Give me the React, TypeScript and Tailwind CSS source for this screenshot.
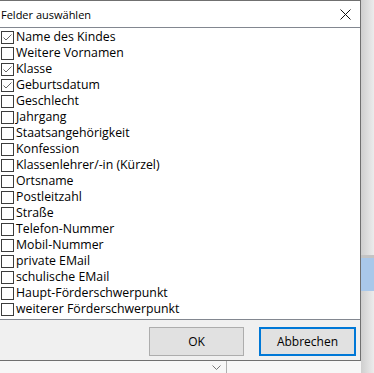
import React from 'react';

const fields: { label: string; checked: boolean }[] = [
  { label: 'Name des Kindes', checked: true },
  { label: 'Weitere Vornamen', checked: false },
  { label: 'Klasse', checked: true },
  { label: 'Geburtsdatum', checked: true },
  { label: 'Geschlecht', checked: false },
  { label: 'Jahrgang', checked: false },
  { label: 'Staatsangehörigkeit', checked: false },
  { label: 'Konfession', checked: false },
  { label: 'Klassenlehrer/-in (Kürzel)', checked: false },
  { label: 'Ortsname', checked: false },
  { label: 'Postleitzahl', checked: false },
  { label: 'Straße', checked: false },
  { label: 'Telefon-Nummer', checked: false },
  { label: 'Mobil-Nummer', checked: false },
  { label: 'private EMail', checked: false },
  { label: 'schulische EMail', checked: false },
  { label: 'Haupt-Förderschwerpunkt', checked: false },
  { label: 'weiterer Förderschwerpunkt', checked: false },
];

function CheckBox({ checked }: { checked: boolean }) {
  return (
    <span className="w-[13px] h-[13px] border border-[#3c3c3c] bg-white flex items-center justify-center shrink-0">
      {checked && (
        <svg width="11" height="11" viewBox="0 0 11 11">
          <path d="M1.5 5.5 L4 8 L9.5 2.5" fill="none" stroke="#666666" strokeWidth="1" />
        </svg>
      )}
    </span>
  );
}

export default function App() {
  return (
    <div
      className="w-[374px] h-[373px] bg-white flex overflow-hidden"
      style={{ fontFamily: '"Open Sans", "Noto Sans", sans-serif' }}
    >
      {/* Dialog + background below */}
      <div className="w-[361px] flex flex-col">
        <div className="h-[361px] flex flex-col bg-white border-t border-r border-b border-[#707070]">
          {/* Title bar */}
          <div className="h-[26px] flex items-center justify-between pl-px pr-[9px]">
            <span className="text-[11px] text-black leading-none">Felder auswählen</span>
            <svg width="11" height="11" viewBox="0 0 11 11">
              <path d="M0.5 0.5 L10.5 10.5 M10.5 0.5 L0.5 10.5" stroke="#111" strokeWidth="1" />
            </svg>
          </div>

          {/* Checked list box */}
          <div className="h-[293px] border-t border-b border-[#828790] bg-white flex flex-col pt-px">
            {fields.map((f) => (
              <div key={f.label} className="h-[16px] flex items-center gap-[2px] pl-px">
                <CheckBox checked={f.checked} />
                <span className="text-[12.3px] leading-none text-black whitespace-nowrap">{f.label}</span>
              </div>
            ))}
          </div>

          {/* Button area */}
          <div className="flex-1 bg-[#f0f0f0] flex items-start justify-end gap-[15px] pt-[7px] pr-[4px]">
            <button className="w-[95px] h-[29px] bg-[#e1e1e1] border border-[#adadad] text-[12px] text-black">
              OK
            </button>
            <button className="w-[97px] h-[29px] bg-[#e1e1e1] border-2 border-[#0078d7] text-[12px] text-black">
              Abbrechen
            </button>
          </div>
        </div>
        {/* Background strip under the dialog */}
        <div className="flex-1 flex bg-[#f7f7f7]">
          <div className="w-[227px] flex justify-end items-center pr-[5px] border-r border-[#b0b0b0]">
            <svg width="9" height="5" viewBox="0 0 9 5">
              <path d="M0.5 0.5 L4.5 4.5 L8.5 0.5" fill="none" stroke="#777" strokeWidth="1" />
            </svg>
          </div>
        </div>
      </div>

      {/* Shadow / background to the right */}
      <div className="flex-1 flex flex-col bg-gradient-to-r from-[#cfcfcf] to-[#ececec]">
        <div className="h-[255px]" />
        <div className="h-[3px] bg-[#c4c4c4]" />
        <div className="h-[33px] bg-[#a9c8ea]" />
        <div className="flex-1" />
      </div>
    </div>
  );
}
